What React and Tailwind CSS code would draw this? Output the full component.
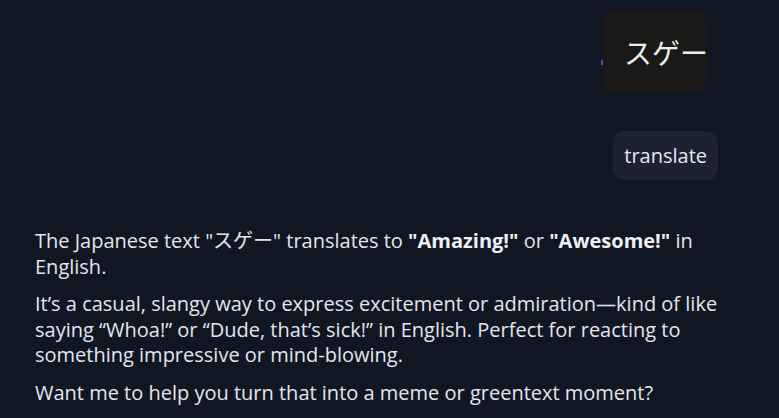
const font = { fontFamily: '"Open Sans", "Noto Sans CJK JP", sans-serif' };

export default function App() {
  return (
    <div className="w-[779px] h-[418px] overflow-hidden bg-[#111722] text-[#e3e6ef]" style={font}>
      <div className="flex flex-col items-end pr-[61px] pt-[11px]">
        {/* image attachment */}
        <div className="flex mr-[12px] relative">
          <span className="absolute -left-[1px] top-[49px] w-[2px] h-[5px] bg-[#2b5fb8]"></span>
          <div className="w-[104px] h-[81px] rounded-[10px] bg-[#1a1917] overflow-hidden flex items-center pl-[22px]">
            <span className="text-[28px] whitespace-nowrap text-[#ececec]" style={{ fontFamily: '"Noto Sans CJK JP", sans-serif' }}>スゲー</span>
          </div>
        </div>
        <div className="mt-[39px] h-[49px] px-[11px] rounded-[12px] bg-[#1d2232] flex items-center text-[20px] text-[#e6e9f2]">
          translate
        </div>
      </div>

      <div className="pl-[35px] pr-[40px] pt-[48px] text-[20px] leading-[25.5px] space-y-[12px]">
        <p>
          The Japanese text "スゲー" translates to <b className="font-bold text-[#eef0f7]">"Amazing!"</b> or{' '}
          <b className="font-bold text-[#eef0f7]">"Awesome!"</b> in English.
        </p>
        <p>
          It’s a casual, slangy way to express excitement or admiration—kind of like saying “Whoa!” or “Dude, that’s sick!” in
          English. Perfect for reacting to something impressive or mind-blowing.
        </p>
        <p>Want me to help you turn that into a meme or greentext moment?</p>
      </div>
    </div>
  );
}
